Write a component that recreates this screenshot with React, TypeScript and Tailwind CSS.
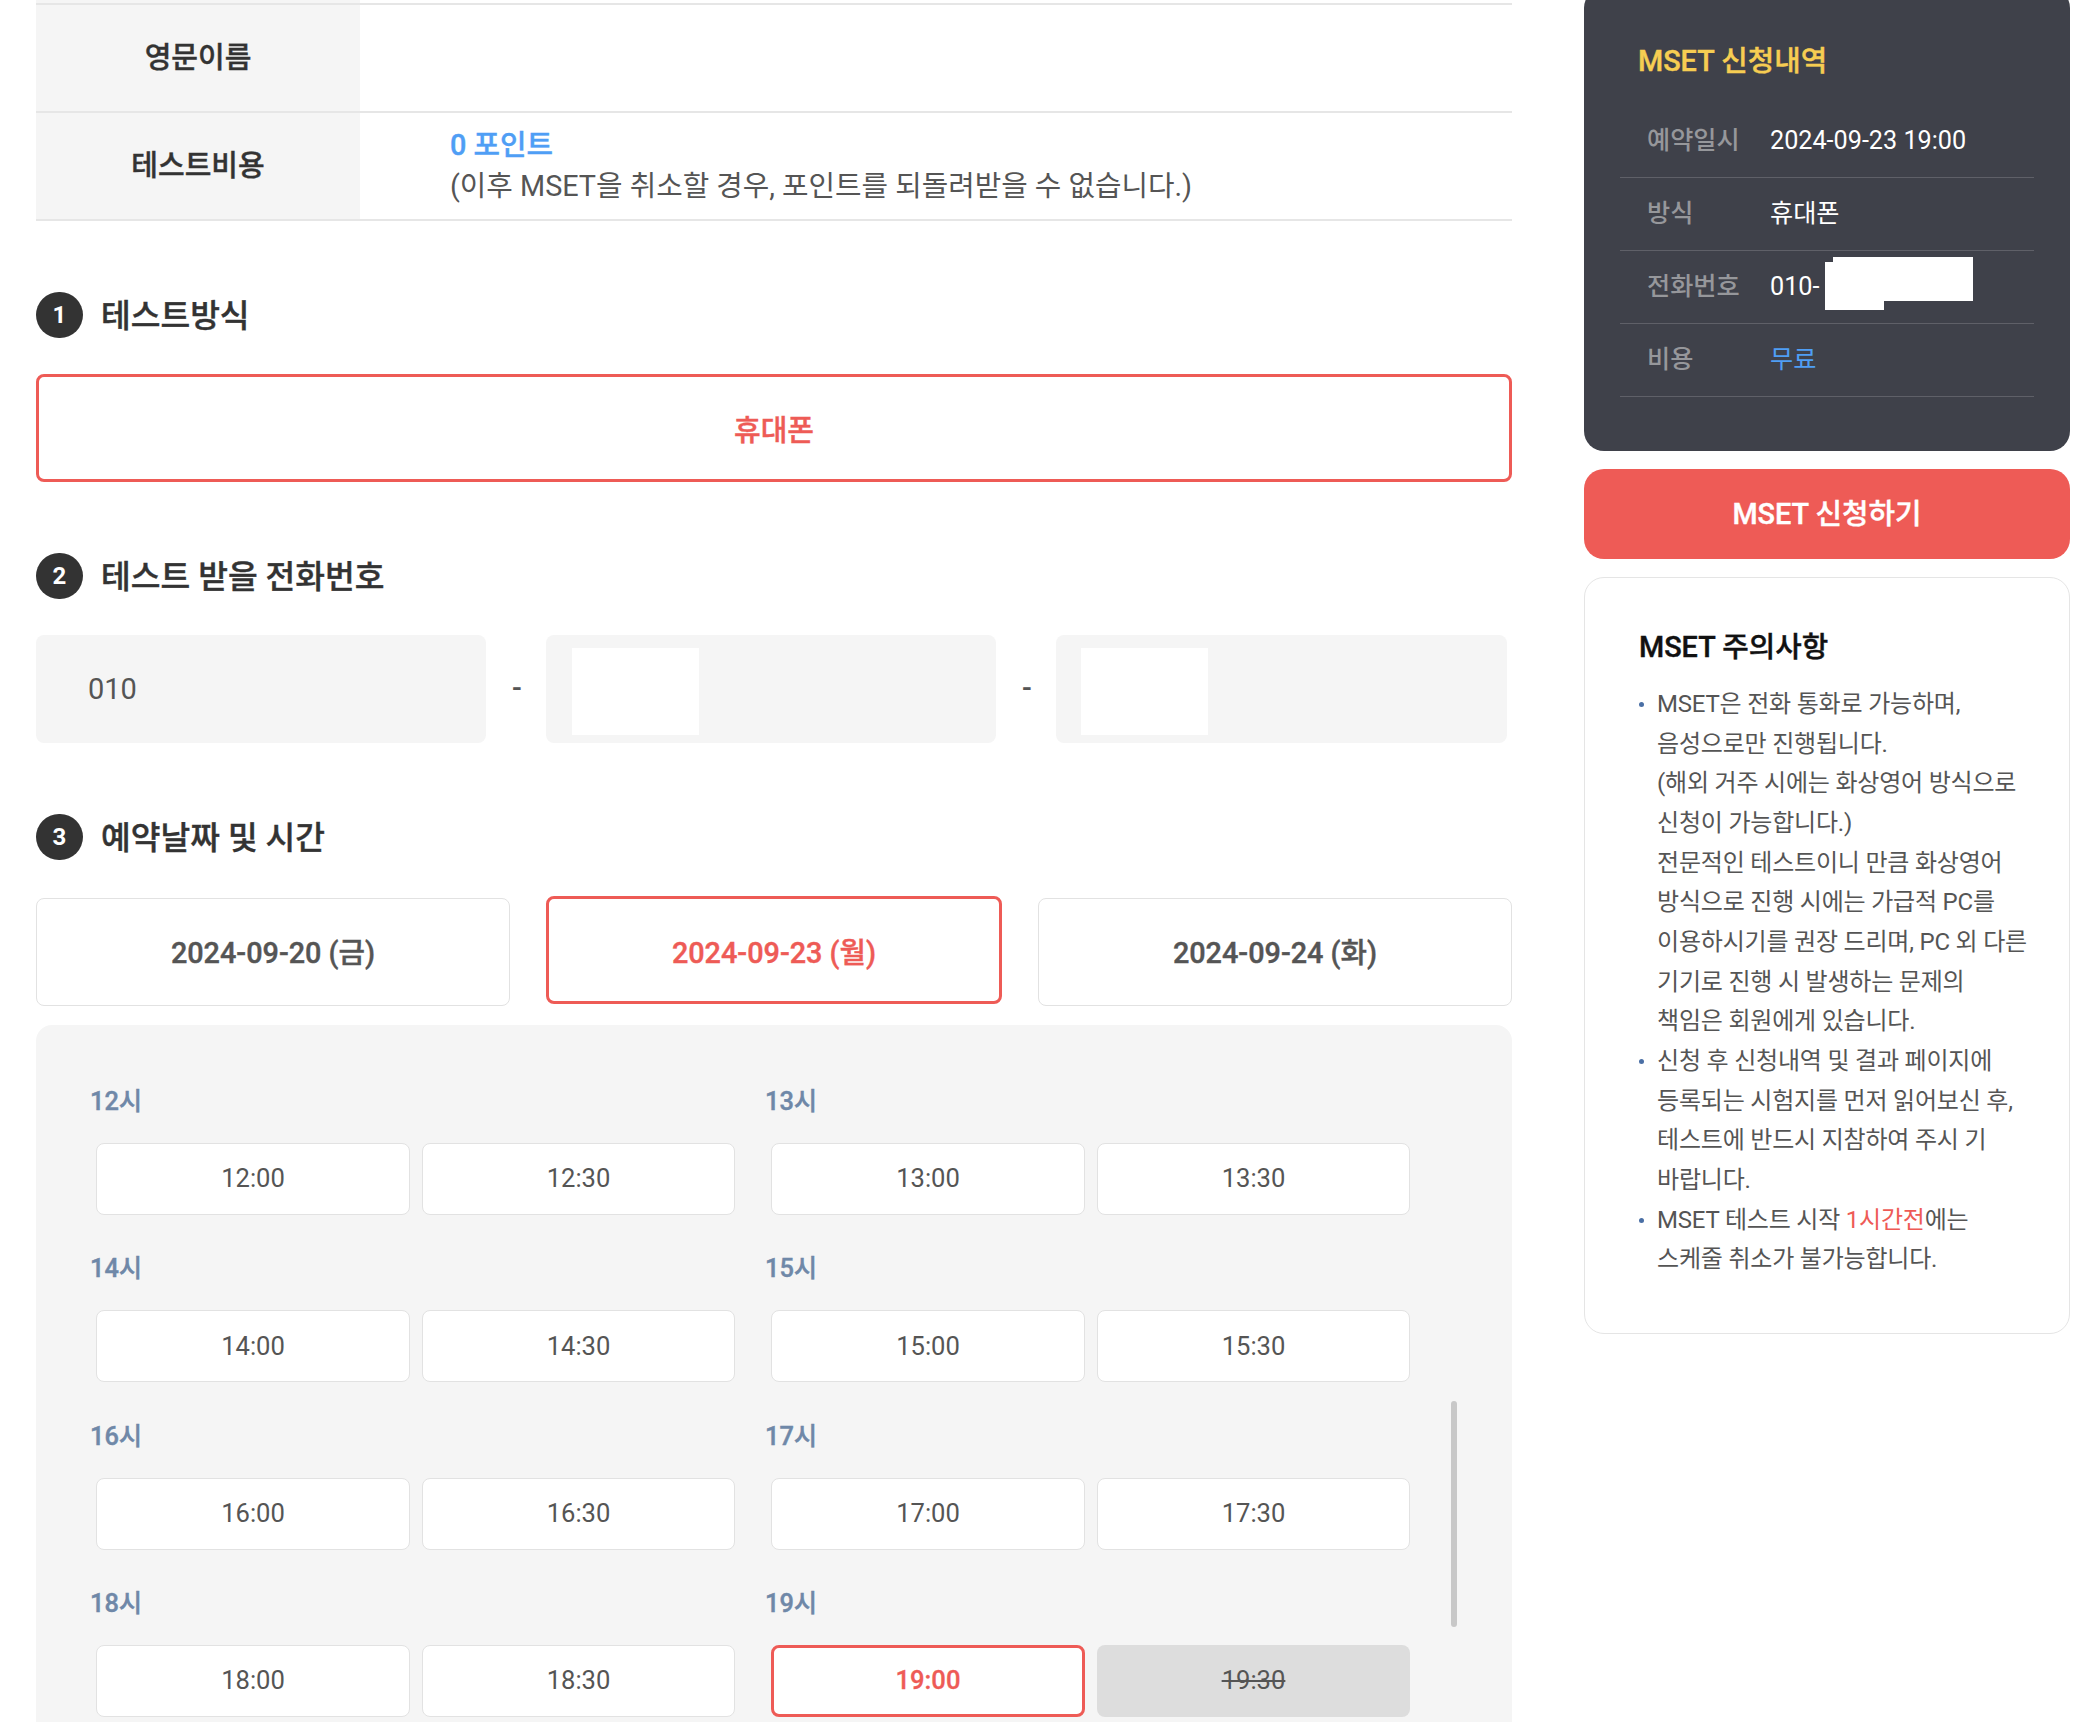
const hours = [
  { label: "12시", slots: ["12:00", "12:30"] },
  { label: "13시", slots: ["13:00", "13:30"] },
  { label: "14시", slots: ["14:00", "14:30"] },
  { label: "15시", slots: ["15:00", "15:30"] },
  { label: "16시", slots: ["16:00", "16:30"] },
  { label: "17시", slots: ["17:00", "17:30"] },
  { label: "18시", slots: ["18:00", "18:30"] },
  { label: "19시", slots: ["19:00", "19:30"] },
];

const summary = [
  { label: "예약일시", value: "2024-09-23 19:00" },
  { label: "방식", value: "휴대폰" },
  { label: "전화번호", value: "010-" },
  { label: "비용", value: "무료" },
];

const notices = [
  [
    "MSET은 전화 통화로 가능하며,",
    "음성으로만 진행됩니다.",
    "(해외 거주 시에는 화상영어 방식으로",
    "신청이 가능합니다.)",
    "전문적인 테스트이니 만큼 화상영어",
    "방식으로 진행 시에는 가급적 PC를",
    "이용하시기를 권장 드리며, PC 외 다른",
    "기기로 진행 시 발생하는 문제의",
    "책임은 회원에게 있습니다.",
  ],
  [
    "신청 후 신청내역 및 결과 페이지에",
    "등록되는 시험지를 먼저 읽어보신 후,",
    "테스트에 반드시 지참하여 주시 기",
    "바랍니다.",
  ],
];

const SectionTitle = ({ num, title }: { num: number; title: string }) => (
  <div className="flex items-center gap-[18px] h-[46px]">
    <span className="w-[47px] h-[46px] rounded-full bg-[#333333] text-white text-[24px] font-bold flex items-center justify-center">
      {num}
    </span>
    <h3 className="pt-[2px] text-[32.3px] leading-[40px] font-medium [-webkit-text-stroke:0.4px] text-[#333333]">{title}</h3>
  </div>
);

const TimeButton = ({ time }: { time: string }) => {
  if (time === "19:00") {
    return (
      <button className="w-[313px] first:w-[314px] h-[72px] pb-[1px] rounded-[8px] bg-white border-[3px] border-[#ee5b56] text-[25.6px] font-medium [-webkit-text-stroke:0.3px] text-[#ee5b56]">
        {time}
      </button>
    );
  }
  if (time === "19:30") {
    return (
      <button className="w-[313px] first:w-[314px] h-[72px] pb-[1px] rounded-[8px] bg-[#dddddd] text-[25.6px] text-[#555555] line-through">
        {time}
      </button>
    );
  }
  return (
    <button className="w-[313px] first:w-[314px] h-[72px] pb-[1px] rounded-[8px] bg-white border border-[#e2e2e2] text-[25.6px] text-[#555555]">
      {time}
    </button>
  );
};

export default function App() {
  return (
    <div className="w-[2098px] h-[1722px] overflow-hidden bg-white flex font-['Roboto','Noto_Sans_CJK_KR',sans-serif]">
      {/* Left column */}
      <div className="ml-[36px] w-[1476px] shrink-0">
        <div className="h-[5px] border-b-2 border-[#e6e6e6]">
          <div className="w-[324px] h-full bg-[#f5f5f5]"></div>
        </div>
        <div className="flex h-[108px] border-b-2 border-[#e6e6e6]">
          <div className="w-[324px] bg-[#f5f5f5] flex items-center justify-center pt-[2px] text-[29px] font-medium [-webkit-text-stroke:0.4px] text-[#333333]">
            영문이름
          </div>
          <div className="flex-1"></div>
        </div>
        <div className="flex h-[108px] border-b-2 border-[#e6e6e6]">
          <div className="w-[324px] bg-[#f5f5f5] flex items-center justify-center pt-[2px] text-[29px] font-medium [-webkit-text-stroke:0.4px] text-[#333333]">
            테스트비용
          </div>
          <div className="flex-1 pl-[90px] flex flex-col justify-center">
            <p className="text-[28.8px] leading-[41px] font-medium [-webkit-text-stroke:0.4px] text-[#4f9ef5]">0 포인트</p>
            <p className="text-[28.8px] leading-[41px] text-[#555555]">
              (이후 MSET을 취소할 경우, 포인트를 되돌려받을 수 없습니다.)
            </p>
          </div>
        </div>

        <div className="mt-[71px]">
          <SectionTitle num={1} title="테스트방식" />
          <div className="mt-[36px] h-[108px] rounded-[8px] border-[3px] border-[#ee5b56] flex items-center justify-center pt-[8px] text-[29px] font-medium [-webkit-text-stroke:0.4px] text-[#ee5b56]">
            휴대폰
          </div>
        </div>

        <div className="mt-[71px]">
          <SectionTitle num={2} title="테스트 받을 전화번호" />
          <div className="mt-[36px] flex items-center">
            <div className="w-[450px] h-[108px] rounded-[8px] bg-[#f5f5f5] pl-[52px] pt-[2px] flex items-center text-[29px] text-[#555555]">
              010
            </div>
            <span className="w-[60px] pl-[2px] text-center text-[28.8px] font-medium text-[#555555]">-</span>
            <div className="relative w-[450px] h-[108px] rounded-[8px] bg-[#f5f5f5]">
              <div className="absolute left-[26px] top-[13px] w-[127px] h-[87px] bg-white"></div>
            </div>
            <span className="w-[60px] pl-[2px] text-center text-[28.8px] font-medium text-[#555555]">-</span>
            <div className="relative w-[451px] h-[108px] rounded-[8px] bg-[#f5f5f5]">
              <div className="absolute left-[25px] top-[13px] w-[127px] h-[87px] bg-white"></div>
            </div>
          </div>
        </div>

        <div className="mt-[71px]">
          <SectionTitle num={3} title="예약날짜 및 시간" />
          <div className="mt-[36px] flex items-start gap-[36px] h-[110px]">
            <button className="mt-[2px] w-[474px] h-[108px] pt-[4px] rounded-[8px] border border-[#e2e2e2] text-[28.8px] font-medium [-webkit-text-stroke:0.4px] text-[#555555]">
              2024-09-20 (금)
            </button>
            <button className="w-[456px] h-[108px] pt-[7px] rounded-[8px] border-[3px] border-[#ee5b56] text-[28.8px] font-medium [-webkit-text-stroke:0.4px] text-[#ee5b56]">
              2024-09-23 (월)
            </button>
            <button className="mt-[2px] w-[474px] h-[108px] pt-[4px] rounded-[8px] border border-[#e2e2e2] text-[28.8px] font-medium [-webkit-text-stroke:0.4px] text-[#555555]">
              2024-09-24 (화)
            </button>
          </div>
          <div className="relative mt-[19px] h-[760px] rounded-[16px] bg-[#f5f5f5] pl-[55px] pt-[59px]">
            <div className="grid grid-cols-[675px_675px]">
              {hours.map((h) => (
                <div key={h.label} className="h-[167.3px]">
                  <p className="-ml-[1px] text-[25.4px] leading-[34px] font-medium [-webkit-text-stroke:0.4px] text-[#6f88a8]">{h.label}</p>
                  <div className="mt-[25px] ml-[5px] flex gap-[12px]">
                    {h.slots.map((t) => (
                      <TimeButton key={t} time={t} />
                    ))}
                  </div>
                </div>
              ))}
            </div>
            {/* scrollbar thumb */}
            <div className="absolute left-[1415px] top-[376px] w-[6px] h-[226px] rounded-full bg-[#c8c8c8]"></div>
          </div>
        </div>
      </div>

      {/* Right column */}
      <div className="ml-[72px] w-[486px] shrink-0">
        <div className="-mt-[12px] rounded-[20px] bg-[#3f414a] px-[36px] pt-[53px] pb-[54px]">
          <h4 className="pl-[18px] text-[28.8px] leading-[40px] font-medium [-webkit-text-stroke:0.4px] text-[#f6cd52]">MSET 신청내역</h4>
          <div className="mt-[24px]">
            {summary.map((row) => (
              <div key={row.label} className="relative flex items-center h-[73px] border-b border-[#5f6068] text-[25.2px]">
                <span className="w-[150px] pl-[27px] font-medium text-[#96979b]">{row.label}</span>
                <span className={row.label === "비용" ? "text-[#4f9ef5]" : "text-white"}>{row.value}</span>
                {row.label === "전화번호" && (
                  <>
                    <div className="absolute left-[205px] top-[11px] w-[59px] h-[48px] bg-white"></div>
                    <div className="absolute left-[213px] top-[6px] w-[140px] h-[44px] bg-white"></div>
                  </>
                )}
              </div>
            ))}
          </div>
        </div>

        <button className="mt-[18px] w-full h-[90px] pt-[2px] rounded-[20px] bg-[#ee5b56] text-[28.8px] font-medium [-webkit-text-stroke:0.4px] text-white">
          MSET 신청하기
        </button>

        <div className="mt-[18px] rounded-[20px] border border-[#e5e5e5] pl-[54px] pt-[49px] pb-[53px]">
          <h4 className="text-[28.8px] leading-[40px] font-medium [-webkit-text-stroke:0.4px] text-[#111111]">MSET 주의사항</h4>
          <ul className="mt-[18px] text-[24px] leading-[39.65px] text-[#555555] tracking-[-0.2px]">
            {notices.map((lines) => (
              <li key={lines[0]} className="flex">
                <span className="w-[18px] shrink-0 pt-[17px]">
                  <span className="block w-[5px] h-[5px] rounded-full bg-[#4a6fa5]"></span>
                </span>
                <div className="whitespace-nowrap">
                  {lines.map((line) => (
                    <p key={line}>{line}</p>
                  ))}
                </div>
              </li>
            ))}
            <li className="flex">
              <span className="w-[18px] shrink-0 pt-[17px]">
                <span className="block w-[5px] h-[5px] rounded-full bg-[#4a6fa5]"></span>
              </span>
              <div className="whitespace-nowrap">
                <p>
                  MSET 테스트 시작 <span className="text-[#ee5b56]">1시간전</span>에는
                </p>
                <p>스케줄 취소가 불가능합니다.</p>
              </div>
            </li>
          </ul>
        </div>
      </div>
    </div>
  );
}
